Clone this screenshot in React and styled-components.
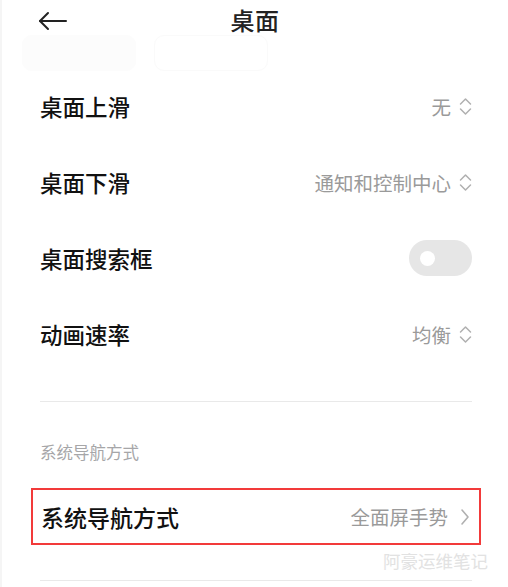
import React from 'react'
import styled, { createGlobalStyle } from 'styled-components'

const GlobalStyle = createGlobalStyle`
  body {
    margin: 0;
    background: #ffffff;
    font-family: "Noto Sans CJK SC", "Noto Sans", sans-serif;
  }
`

const rows = [
  { label: '桌面上滑', value: '无', kind: 'select' },
  { label: '桌面下滑', value: '通知和控制中心', kind: 'select' },
  { label: '桌面搜索框', kind: 'toggle' },
  { label: '动画速率', value: '均衡', kind: 'select' },
]

function UpDown() {
  return (
    <svg width="13" height="21" viewBox="0 0 13 21" fill="none" stroke="#b0b0b0" strokeWidth="1.5" strokeLinecap="round" strokeLinejoin="round">
      <path d="M1.5 8 L6.5 3 L11.5 8" />
      <path d="M1.5 13 L6.5 18 L11.5 13" />
    </svg>
  )
}

function ChevronRight() {
  return (
    <svg width="10" height="18" viewBox="0 0 10 18" fill="none" stroke="#b0b0b0" strokeWidth="1.6" strokeLinecap="round" strokeLinejoin="round">
      <path d="M2 2 L8 9 L2 16" />
    </svg>
  )
}

function BackArrow() {
  return (
    <svg width="30" height="20" viewBox="0 0 30 20" fill="none" stroke="#222" strokeWidth="2" strokeLinecap="round" strokeLinejoin="round">
      <path d="M28 10 H2" />
      <path d="M10 2 L2 10 L10 18" />
    </svg>
  )
}

export default function App() {
  return (
    <>
      <GlobalStyle />
      <Page>
        <Header>
          <Back><BackArrow /></Back>
          <Title>桌面</Title>
        </Header>
        <Ghosts>
          <GhostChip />
          <GhostChip outline />
        </Ghosts>
        <Content>
          {rows.map(r => (
            <Row key={r.label}>
              <Label>{r.label}</Label>
              {r.kind === 'toggle' ? (
                <Toggle><Knob /></Toggle>
              ) : (
                <Value>
                  {r.value}
                  <UpDown />
                </Value>
              )}
            </Row>
          ))}
          <Divider $top={29} />
          <SectionTitle>系统导航方式</SectionTitle>
          <HighlightRow>
            <Label>系统导航方式</Label>
            <Value>
              全面屏手势
              <ChevronRight />
            </Value>
          </HighlightRow>
          <Watermark>阿豪运维笔记</Watermark>
          <Divider $top={7} />
        </Content>
      </Page>
    </>
  )
}

const Page = styled.div`
  width: 508px;
  height: 587px;
  overflow: hidden;
  background: #fff;
  border-left: 2px solid #f5f5f5;
  box-sizing: border-box;
`

const Header = styled.div`
  position: relative;
  height: 40px;
  display: flex;
  align-items: center;
  justify-content: center;
`

const Back = styled.div`
  position: absolute;
  left: 36px;
  top: 11px;
  display: flex;
`

const Title = styled.div`
  font-size: 24px;
  font-weight: 500;
  color: #222;
  letter-spacing: 0.5px;
  margin-top: -2px;
`

const Ghosts = styled.div`
  height: 28px;
  display: flex;
  gap: 18px;
  padding-left: 20px;
`

const GhostChip = styled.div`
  width: 112px;
  height: 34px;
  margin-top: -5px;
  border-radius: 10px;
  background: ${p => (p.outline ? '#fff' : '#fcfcfc')};
  border: 1px solid ${p => (p.outline ? '#fafafa' : '#fcfcfc')};
`

const Content = styled.div`
  padding: 0 36px 0 38px;
  display: flex;
  flex-direction: column;
`

const Row = styled.div`
  height: 76px;
  display: flex;
  align-items: center;
  justify-content: space-between;
`

const Label = styled.div`
  font-size: 22.5px;
  font-weight: 500;
  color: #111;
`

const Value = styled.div`
  display: flex;
  align-items: center;
  gap: 8px;
  font-size: 19.5px;
  color: #9a9a9a;
`

const Toggle = styled.div`
  width: 63px;
  height: 36px;
  border-radius: 18px;
  background: #e6e6e6;
  display: flex;
  align-items: center;
  padding-left: 11px;
  box-sizing: border-box;
`

const Knob = styled.div`
  width: 15px;
  height: 15px;
  border-radius: 50%;
  background: #fff;
`

const Divider = styled.div`
  height: 1px;
  background: #e9e9e9;
  margin-top: ${p => p.$top}px;
`

const SectionTitle = styled.div`
  margin-top: 38px;
  font-size: 16.5px;
  color: #a6a6a8;
`

const HighlightRow = styled(Row)`
  height: 57px;
  margin: 24px -9px 0 -9px;
  padding: 0 9px 0 8px;
  border: 2px solid #f23a3a;
  box-sizing: border-box;

  ${Label} {
    font-size: 23px;
  }
  ${Value} {
    gap: 12px;
  }
`

const Watermark = styled.div`
  align-self: flex-end;
  margin-right: -16px;
  font-size: 17.5px;
  color: #e2e2e2;
  margin-top: 4px;
  line-height: 24px;
`
